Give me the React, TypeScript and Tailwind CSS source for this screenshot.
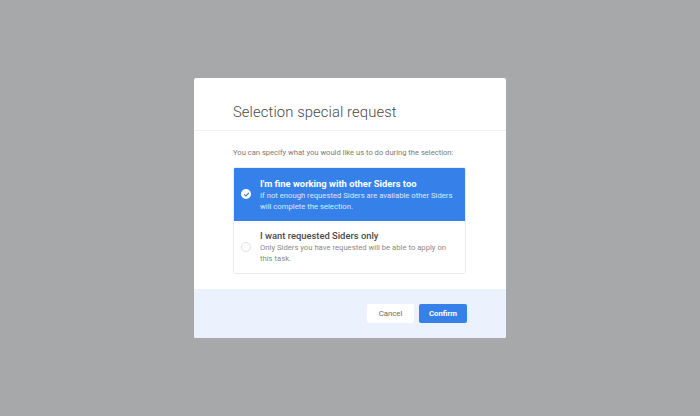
import React from "react";

export default function App() {
  return (
    <div className="w-[700px] h-[416px] bg-[#a7a8aa] flex items-center justify-center" style={{ fontFamily: "Roboto, 'Liberation Sans', sans-serif" }}>
      <div className="w-[312px] h-[260px] bg-white rounded-[2px] flex flex-col overflow-hidden">
        <div className="h-[53px] border-b border-[#f0f1f3] flex items-end pl-[39px] pb-[10px]">
          <div className="text-[14.8px] font-light text-[#4a4a4a] leading-none tracking-[0.1px]">Selection special request</div>
        </div>
        <div className="flex-1 px-[39px] pt-[18px]">
          <div className="text-[7.6px] text-[#7a7a7a] leading-none whitespace-nowrap">You can specify what you would like us to do during the selection:</div>
          <div className="mt-[10px] w-[233px] border border-[#ececec] rounded-[2px] overflow-hidden">
            <div className="h-[53px] bg-[#3680ea] flex items-center pl-[7px] gap-[9px]">
              <div className="w-[10px] h-[10px] rounded-full bg-white flex items-center justify-center shrink-0">
                <svg width="7" height="7" viewBox="0 0 10 10"><path d="M2.2 5.2 L4.2 7.1 L7.9 3.2" fill="none" stroke="#3680ea" strokeWidth="1.6" strokeLinecap="round" strokeLinejoin="round" /></svg>
              </div>
              <div className="flex flex-col w-[193px]">
                <div className="text-[9.4px] font-bold text-white leading-[13px] whitespace-nowrap">I'm fine working with other Siders too</div>
                <div className="text-[7.7px] text-[#dce8fb] leading-[11px]">If not enough requested Siders are available other Siders will complete the selection.</div>
              </div>
            </div>
            <div className="h-[52px] bg-white flex items-center pl-[7px] gap-[9px]">
              <div className="w-[10px] h-[10px] rounded-full border border-[#e2e2e2] shrink-0" />
              <div className="flex flex-col w-[193px]">
                <div className="text-[9.4px] font-medium text-[#4a4a4a] leading-[13px] whitespace-nowrap">I want requested Siders only</div>
                <div className="text-[7.7px] text-[#8a8a8a] leading-[11px]">Only Siders you have requested will be able to apply on this task.</div>
              </div>
            </div>
          </div>
        </div>
        <div className="h-[49px] bg-[#ebf1fd] flex items-center justify-end pr-[39px] gap-[5px]">
          <button className="w-[47px] h-[19px] bg-white rounded-[2px] text-[7.8px] text-[#6a6a6a]">Cancel</button>
          <button className="w-[48px] h-[19px] bg-[#3680ea] rounded-[2px] text-[7.8px] font-bold text-white">Confirm</button>
        </div>
      </div>
    </div>
  );
}
